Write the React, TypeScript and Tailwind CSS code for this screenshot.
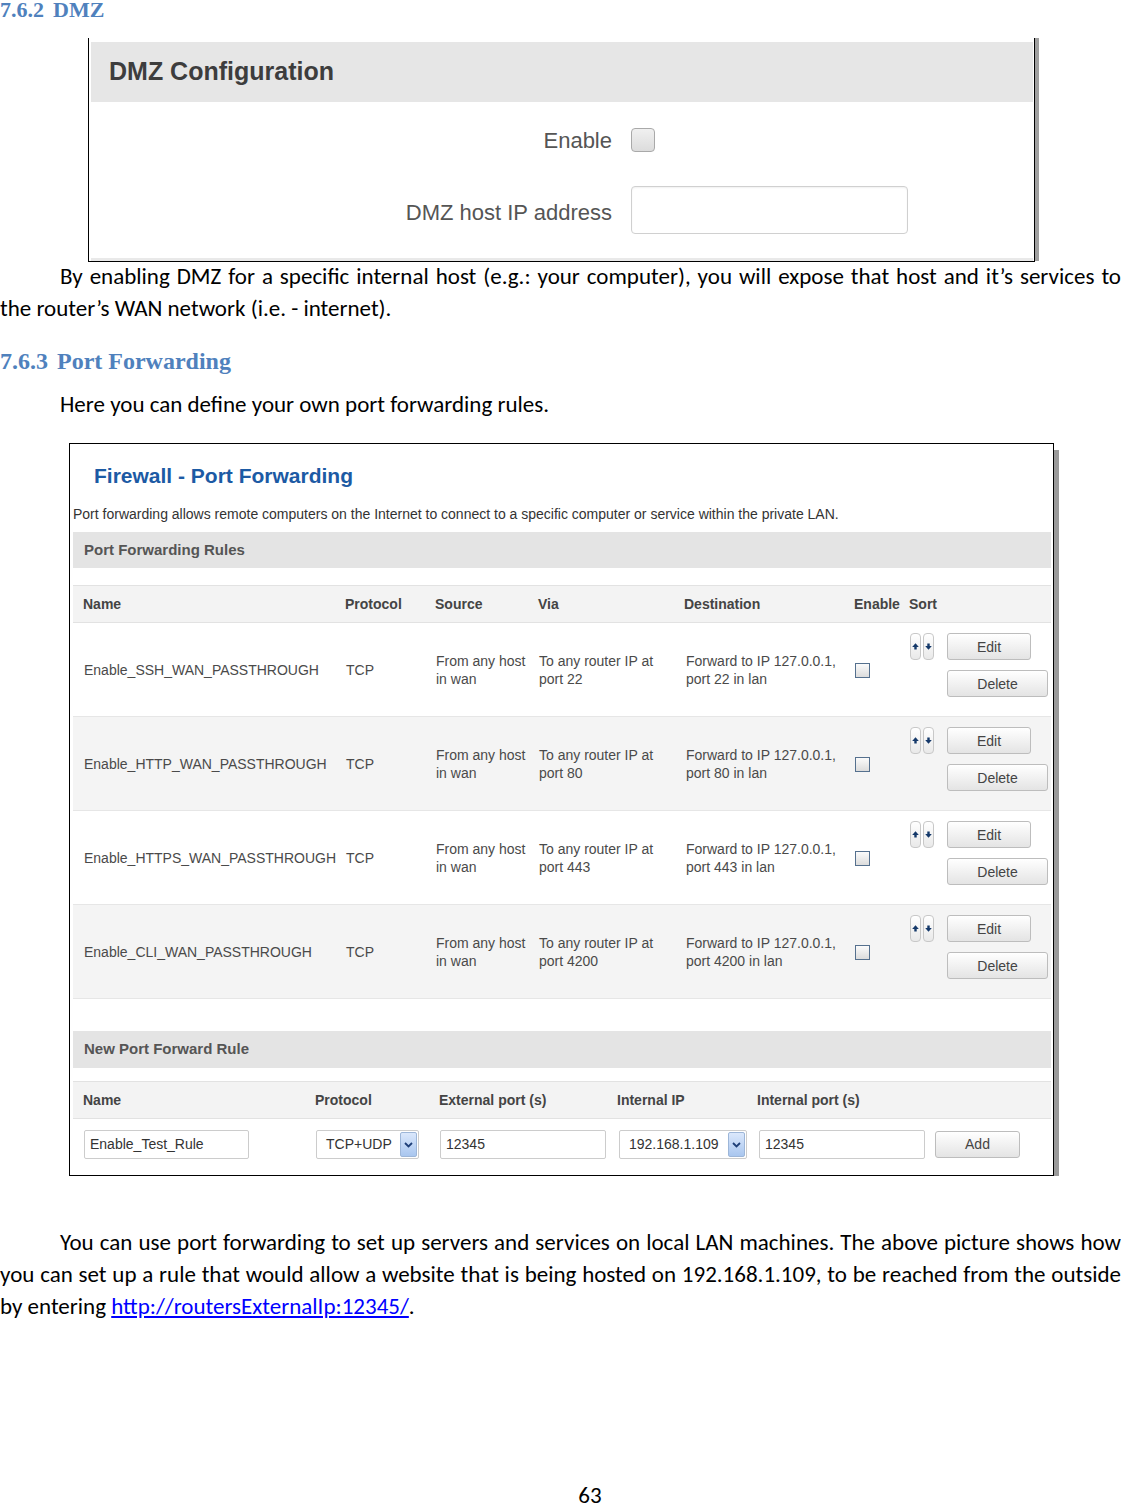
import React from "react";

const doc = "font-['Carlito','Lato',sans-serif] text-[23px] leading-[32px] text-black";
const ui = "font-['Liberation_Sans',Arial,sans-serif]";

const rules = [
  { name: "Enable_SSH_WAN_PASSTHROUGH", port: "22", alt: false },
  { name: "Enable_HTTP_WAN_PASSTHROUGH", port: "80", alt: true },
  { name: "Enable_HTTPS_WAN_PASSTHROUGH", port: "443", alt: false },
  { name: "Enable_CLI_WAN_PASSTHROUGH", port: "4200", alt: true },
];

function SortArrow({ down }: { down?: boolean }) {
  return (
    <div className="w-[11px] h-[27px] rounded-[4px] border border-[#c8c8c8] bg-gradient-to-b from-white to-[#e9e9e9] flex items-center justify-center">
      <svg width="7" height="7" viewBox="0 0 7 7">
        {down ? (
          <polygon points="2.3,0.5 4.7,0.5 4.7,3 6.8,3 3.5,6.8 0.2,3 2.3,3" fill="#15396a" />
        ) : (
          <polygon points="3.5,0.2 6.8,4 4.7,4 4.7,6.5 2.3,6.5 2.3,4 0.2,4" fill="#15396a" />
        )}
      </svg>
    </div>
  );
}

function Btn({ label, w }: { label: string; w: string }) {
  return (
    <button
      className={`${w} h-[27px] rounded-[3px] border border-[#bdbdbd] bg-gradient-to-b from-white to-[#e4e4e4] text-[14px] text-[#444] ${ui}`}
    >
      {label}
    </button>
  );
}

function SmallCheck() {
  return (
    <div className="w-[15px] h-[15px] border border-[#55708e] bg-gradient-to-b from-[#fbfbfb] to-[#dcdcdc]" />
  );
}

function SelectBox({ value, w }: { value: string; w: string }) {
  return (
    <div className={`${w} h-[29px] rounded-[2px] border border-[#cccccc] bg-white flex items-stretch`}>
      <span className="flex-1 flex items-center pl-[9px] text-[14px] text-[#333]">{value}</span>
      <span className="w-[17px] my-[1px] mr-[1px] rounded-[2px] border border-[#9db6d8] bg-gradient-to-b from-[#dbe8fb] to-[#a9c6ef] flex items-center justify-center">
        <svg width="9" height="6" viewBox="0 0 9 6">
          <path d="M1 1 L4.5 4.5 L8 1" stroke="#1e3f78" strokeWidth="1.8" fill="none" />
        </svg>
      </span>
    </div>
  );
}

function TextBox({ value, w }: { value: string; w: string }) {
  return (
    <div className={`${w} h-[29px] rounded-[2px] border border-[#cccccc] bg-white flex items-center pl-[5px] text-[14px] text-[#333]`}>
      {value}
    </div>
  );
}

export default function App() {
  return (
    <div className="w-[1121px] h-[1506px] bg-white overflow-hidden">
      {/* 7.6.2 heading */}
      <h2 className="h-[20px] leading-[20px] text-[22px] font-bold text-[#4f81bd] font-['Liberation_Serif',serif]">
        7.6.2<span className="inline-block w-[9px]" />DMZ
      </h2>

      {/* DMZ screenshot */}
      <div className="mt-[18px] ml-[88px] flex">
        <div className={`w-[947px] border-l border-r border-b border-black pt-[4px] pl-[2px] pr-[1px] ${ui}`}>
          <div className="h-[60px] bg-[#e6e6e6] flex items-center pl-[18px] text-[25px] font-bold text-[#3d3d3d]">
            DMZ Configuration
          </div>
          <div className="mt-[25px] h-[26px] flex items-center">
            <span className="w-[521px] text-right text-[22px] text-[#555]">Enable</span>
            <div className="ml-[19px] w-[24px] h-[24px] rounded-[4px] border border-[#a9a9a9] bg-gradient-to-b from-[#f0f0f0] to-[#dcdcdc]" />
          </div>
          <div className="mt-[33px] h-[48px] flex items-center">
            <span className="w-[521px] text-right text-[22px] text-[#555] pt-[4px]">DMZ host IP address</span>
            <div className="ml-[19px] w-[277px] h-[48px] rounded-[4px] border border-[#d0d0d0] bg-white shadow-[inset_0_1px_2px_rgba(0,0,0,0.06)]" />
          </div>
          <div className="mt-[24px] h-[3px] bg-[#e9e9e9]" />
        </div>
        <div className="w-[4px] bg-[#9f9f9f] mb-[1px]" />
      </div>

      {/* paragraph */}
      <div className={`-mt-[2px] ${doc}`}>
        <p className="pl-[60px] text-justify [text-align-last:justify]">
          By enabling DMZ for a specific internal host (e.g.: your computer), you will expose that host and it’s services to
        </p>
        <p>the router’s WAN network (i.e. - internet).</p>
      </div>

      <h2 className="mt-[22px] h-[30px] leading-[30px] text-[24px] font-bold text-[#4f81bd] font-['Liberation_Serif',serif]">
        7.6.3<span className="inline-block w-[9px]" />Port Forwarding
      </h2>

      <p className={`mt-[12px] pl-[60px] ${doc}`}>Here you can define your own port forwarding rules.</p>

      {/* Port forwarding screenshot */}
      <div className="mt-[23px] ml-[69px] flex">
        <div className={`w-[985px] border border-black pl-[3px] pr-[2px] pb-[16px] ${ui}`}>
          <div className="mt-[18px] h-[28px] flex items-center pl-[21px] text-[21px] font-bold text-[#1c5aa4]">
            Firewall - Port Forwarding
          </div>
          <div className="mt-[16px] h-[16px] flex items-center text-[14px] text-[#333]">
            Port forwarding allows remote computers on the Internet to connect to a specific computer or service within the private LAN.
          </div>
          <div className="mt-[10px] h-[36px] bg-[#e4e4e4] flex items-center pl-[11px] text-[15px] font-bold text-[#555]">
            Port Forwarding Rules
          </div>

          {/* rules table */}
          <div className="mt-[17px]">
            <div className="h-[38px] border-t border-b border-[#e2e2e2] bg-[#f3f3f3] grid grid-cols-[262px_90px_103px_146px_170px_55px_152px] items-center text-[14px] font-bold text-[#444]">
              <span className="pl-[10px]">Name</span>
              <span className="pl-[10px]">Protocol</span>
              <span className="pl-[10px]">Source</span>
              <span className="pl-[10px]">Via</span>
              <span className="pl-[10px]">Destination</span>
              <span className="pl-[10px]">Enable</span>
              <span className="pl-[10px]">Sort</span>
            </div>
            {rules.map((r) => (
              <div
                key={r.name}
                className={`h-[94px] border-b border-[#e6e6e6] grid grid-cols-[262px_90px_103px_146px_170px_55px_152px] items-center text-[14px] leading-[18px] text-[#4a4a4a] ${r.alt ? "bg-[#f4f4f4]" : "bg-white"}`}
              >
                <span className="pl-[11px]">{r.name}</span>
                <span className="pl-[11px]">TCP</span>
                <span className="pl-[11px]">
                  From any host
                  <br />
                  in wan
                </span>
                <span className="pl-[11px]">
                  To any router IP at
                  <br />
                  port {r.port}
                </span>
                <span className="pl-[12px]">
                  Forward to IP 127.0.0.1,
                  <br />
                  port {r.port} in lan
                </span>
                <span className="pl-[11px] pt-[2px]">
                  <SmallCheck />
                </span>
                <div className="self-start pt-[10px] pl-[11px] flex">
                  <div className="flex gap-[2px]">
                    <SortArrow />
                    <SortArrow down />
                  </div>
                  <div className="ml-[13px] flex flex-col gap-[10px]">
                    <Btn label="Edit" w="w-[84px]" />
                    <Btn label="Delete" w="w-[101px]" />
                  </div>
                </div>
              </div>
            ))}
          </div>

          <div className="mt-[32px] h-[37px] bg-[#e4e4e4] flex items-center pl-[11px] text-[15px] font-bold text-[#555]">
            New Port Forward Rule
          </div>

          <div className="mt-[13px] h-[38px] border-t border-b border-[#e2e2e2] bg-[#f3f3f3] grid grid-cols-[232px_124px_178px_140px_304px] items-center text-[14px] font-bold text-[#444]">
            <span className="pl-[10px]">Name</span>
            <span className="pl-[10px]">Protocol</span>
            <span className="pl-[10px]">External port (s)</span>
            <span className="pl-[10px]">Internal IP</span>
            <span className="pl-[10px]">Internal port (s)</span>
          </div>

          <div className="mt-[11px] pl-[11px] flex items-center">
            <TextBox value="Enable_Test_Rule" w="w-[165px]" />
            <div className="ml-[67px]">
              <SelectBox value="TCP+UDP" w="w-[103px]" />
            </div>
            <div className="ml-[21px]">
              <TextBox value="12345" w="w-[166px]" />
            </div>
            <div className="ml-[13px]">
              <SelectBox value="192.168.1.109" w="w-[128px]" />
            </div>
            <div className="ml-[12px]">
              <TextBox value="12345" w="w-[166px]" />
            </div>
            <div className="ml-[10px]">
              <Btn label="Add" w="w-[85px] h-[27px]" />
            </div>
          </div>
        </div>
        <div className="w-[5px] mt-[7px] bg-[#9a9a9a]" />
      </div>

      {/* closing paragraph */}
      <div className={`mt-[50px] ${doc}`}>
        <p className="pl-[60px] text-justify [text-align-last:justify]">
          You can use port forwarding to set up servers and services on local LAN machines. The above picture shows how
        </p>
        <p className="text-justify [text-align-last:justify]">
          you can set up a rule that would allow a website that is being hosted on 192.168.1.109, to be reached from the outside
        </p>
        <p>
          by entering{" "}
          <a href="#" className="text-[#0000ff] underline">
            http://routersExternalIp:12345/
          </a>
          .
        </p>
      </div>

      <p className="mt-[164px] text-center pl-[59px] font-['Carlito','Lato',sans-serif] text-[23px] leading-[18px] text-black">
        63
      </p>
    </div>
  );
}
